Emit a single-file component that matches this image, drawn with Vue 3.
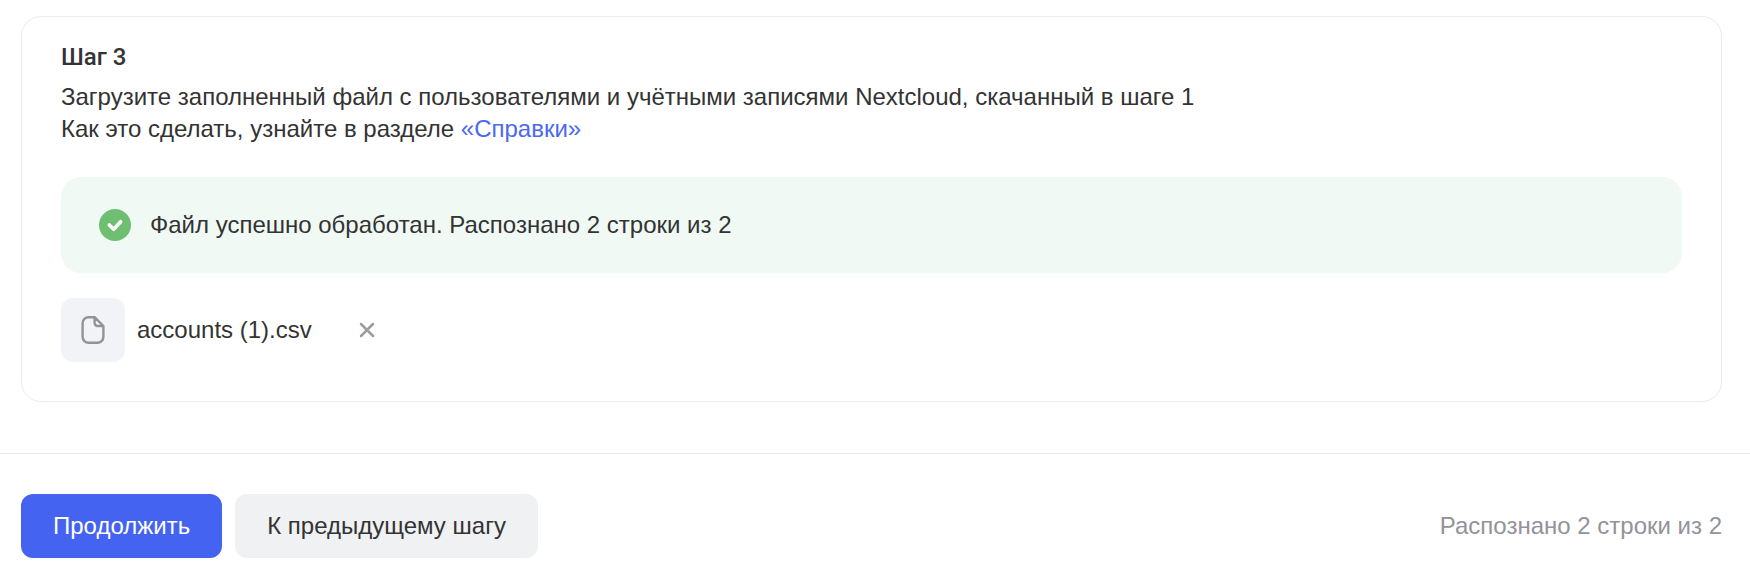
<!--
  Шаг 3: загрузка заполненного файла с учётными записями
-->

<template>
  <main class="page">
    <section class="step-card">
      <h2 class="step-title">Шаг 3</h2>
      <p class="step-text">
        Загрузите заполненный файл с пользователями и учётными записями Nextcloud, скачанный в шаге 1<br>
        Как это сделать, узнайте в разделе <a href="#help" class="link">«Справки»</a>
      </p>

      <!-- Результат обработки файла -->
      <div v-if="file" class="alert" role="status">
        <svg class="alert-icon" viewBox="0 0 32 32" aria-hidden="true">
          <circle cx="16" cy="16" r="16" fill="#6fbf73" />
          <path d="M10.3 15.9l4.4 4.4 6.9-7.6" fill="none" stroke="#fff" stroke-width="3.6" stroke-linecap="round" stroke-linejoin="round" />
        </svg>
        <span>Файл успешно обработан. {{ summary }}</span>
      </div>

      <!-- Загруженный файл -->
      <div v-if="file" class="file">
        <div class="file-preview">
          <svg class="file-icon" viewBox="0 0 32 32" aria-hidden="true">
            <path d="M17.6 3.2H11.6a6 6 0 0 0-6 6v13.6a6 6 0 0 0 6 6h8.8a6 6 0 0 0 6-6V12zM17.6 3.2v5.8a3 3 0 0 0 3 3h5.8" fill="none" stroke="#919396" stroke-width="2.4" stroke-linejoin="round" />
          </svg>
        </div>
        <span class="file-name">{{ file.name }}</span>
        <button type="button" class="btn-remove" aria-label="Удалить файл" @click="removeFile">
          <svg viewBox="0 0 16 16" aria-hidden="true">
            <path d="M2 2l12 12M14 2L2 14" fill="none" stroke="#a09c9c" stroke-width="2.5" stroke-linecap="round" />
          </svg>
        </button>
      </div>
    </section>

    <footer class="footer">
      <button type="button" class="btn btn-primary" :disabled="!file">Продолжить</button>
      <button type="button" class="btn btn-secondary">К предыдущему шагу</button>
      <span v-if="file" class="footer-status">{{ summary }}</span>
    </footer>
  </main>
</template>

<script setup>
import { ref, computed } from 'vue'

const file = ref({
  name: 'accounts (1).csv',
  recognized: 2,
  total: 2
})

// Текст с количеством распознанных строк
const summary = computed(() => `Распознано ${file.value.recognized} строки из ${file.value.total}`)

const removeFile = () => {
  file.value = null
}
</script>

<style>
body {
  background-color: #fff;
}
</style>

<style scoped>
.page {
  padding-top: 16px;
  font-family: "Liberation Sans", Arial, sans-serif;
  font-size: 24px;
  line-height: 32px;
  color: #333333;
}

.step-card {
  margin: 0 28px 0 21px;
  padding: 24px 39px 39px;
  border: 1px solid #ebebf0;
  border-radius: 20px;
}

.step-title {
  margin: 0 0 8px;
  font-family: Roboto, sans-serif;
  font-size: 24px;
  font-weight: 500;
  line-height: 32px;
}

.step-text {
  margin: 0 0 32px;
}

.link {
  color: #4a69ee;
  text-decoration: none;
}

.alert {
  display: flex;
  align-items: center;
  gap: 19px;
  padding: 32px 38px;
  border-radius: 20px;
  background-color: #f0f9f4;
}

.alert-icon {
  flex: none;
  width: 32px;
  height: 32px;
}

.file {
  display: flex;
  align-items: center;
  margin-top: 25px;
}

.file-preview {
  display: flex;
  align-items: center;
  justify-content: center;
  width: 64px;
  height: 64px;
  border-radius: 12px;
  background-color: #f1f3f7;
}

.file-icon {
  width: 32px;
  height: 32px;
}

.file-name {
  margin-left: 12px;
}

.btn-remove {
  display: flex;
  margin-left: 39px;
  padding: 8px;
  border: none;
  background: none;
  cursor: pointer;
}

.btn-remove svg {
  width: 16px;
  height: 16px;
}

.footer {
  display: flex;
  align-items: center;
  gap: 13px;
  margin-top: 51px;
  padding: 40px 28px 16px 21px;
  border-top: 1px solid #ebebed;
}

.btn {
  padding: 16px 32px;
  border: none;
  border-radius: 12px;
  font: inherit;
  cursor: pointer;
}

.btn-primary {
  background-color: #4463f1;
  color: #fff;
}

.btn-secondary {
  background-color: #eff1f3;
  color: #333333;
}

.footer-status {
  margin-left: auto;
  color: #919399;
}
</style>
